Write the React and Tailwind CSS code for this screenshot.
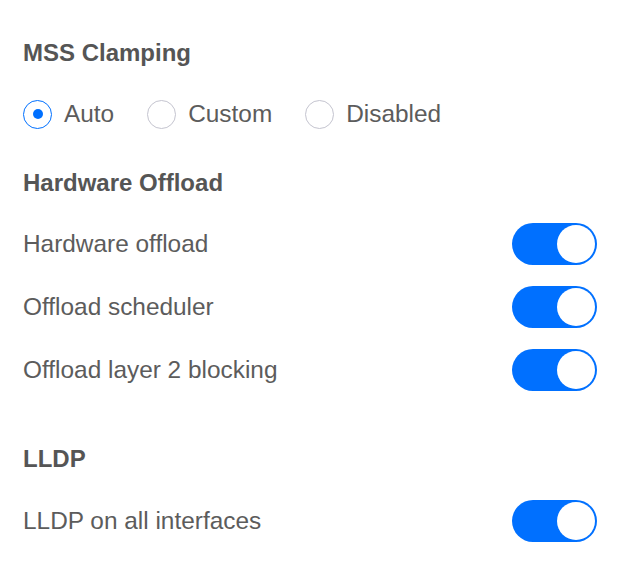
import React, { useState } from 'react';

const Radio = ({ checked, label, onClick }) => (
  <button onClick={onClick} className="flex items-center gap-[12px]">
    <span
      className={`flex h-[29px] w-[29px] items-center justify-center rounded-full border bg-white ${
        checked ? 'border-[#0070ff]' : 'border-[#c4c4cf]'
      }`}
    >
      {checked && <span className="h-[10px] w-[10px] rounded-full bg-[#0070ff]" />}
    </span>
    <span className="text-[24.4px] leading-[30px] text-[#5c5c5c]">{label}</span>
  </button>
);

const Toggle = ({ on, onClick }) => (
  <button
    onClick={onClick}
    className={`flex h-[42px] w-[85px] items-center rounded-full p-[2px] ${
      on ? 'justify-end bg-[#0070ff]' : 'justify-start bg-[#d0d0d8]'
    }`}
  >
    <span className="h-[38px] w-[38px] rounded-full bg-white" />
  </button>
);

const Row = ({ label, on, onClick, className }) => (
  <div className={`flex h-[42px] items-center justify-between ${className}`}>
    <span className="text-[24.4px] text-[#5c5c5c]">{label}</span>
    <Toggle on={on} onClick={onClick} />
  </div>
);

export default function App() {
  const [mss, setMss] = useState('auto');
  const [toggles, setToggles] = useState({ hw: true, sched: true, l2: true, lldp: true });
  const flip = (k) => setToggles((t) => ({ ...t, [k]: !t[k] }));

  return (
    <div className="min-h-screen bg-white pl-[23px] pr-[22px] pt-[37px] font-['Liberation_Sans',Arial,sans-serif]">
      <h2 className="text-[24px] font-bold leading-[32px] text-[#555]">MSS Clamping</h2>
      <div className="mt-[30px] flex h-[30px] items-center gap-[33px]">
        <Radio checked={mss === 'auto'} label="Auto" onClick={() => setMss('auto')} />
        <Radio checked={mss === 'custom'} label="Custom" onClick={() => setMss('custom')} />
        <Radio checked={mss === 'disabled'} label="Disabled" onClick={() => setMss('disabled')} />
      </div>

      <h2 className="mt-[38px] text-[24px] font-bold leading-[32px] text-[#555]">Hardware Offload</h2>
      <Row className="mt-[24px]" label="Hardware offload" on={toggles.hw} onClick={() => flip('hw')} />
      <Row className="mt-[21px]" label="Offload scheduler" on={toggles.sched} onClick={() => flip('sched')} />
      <Row className="mt-[21px]" label="Offload layer 2 blocking" on={toggles.l2} onClick={() => flip('l2')} />

      <h2 className="mt-[52px] text-[24px] font-bold leading-[32px] text-[#555]">LLDP</h2>
      <Row className="mt-[25px]" label="LLDP on all interfaces" on={toggles.lldp} onClick={() => flip('lldp')} />
    </div>
  );
}
